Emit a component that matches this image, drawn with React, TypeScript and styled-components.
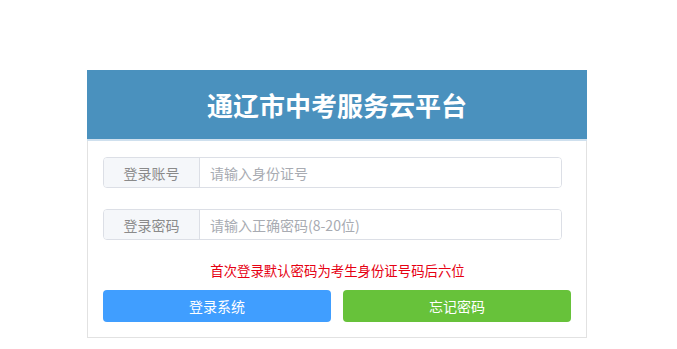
import styled, { createGlobalStyle } from "styled-components";

const GlobalStyle = createGlobalStyle`
  html, body {
    margin: 0;
    padding: 0;
    background: #ffffff;
    font-family: "Noto Sans CJK SC", "Noto Sans", sans-serif;
  }
  * { box-sizing: border-box; }
`;

const Page = styled.div`
  width: 677px;
  height: 349px;
  padding-top: 70px;
  padding-left: 87px;
`;

const Card = styled.div`
  width: 500px;
  border: 1px solid #e2e2e2;
  border-top: none;
  background: #fff;
`;

const Header = styled.div`
  height: 71px;
  margin: 0 -1px;
  background: #4a91be;
  border-bottom: 2px solid #cfe0ee;
  display: flex;
  align-items: center;
  justify-content: center;
  color: #fff;
  font-size: 26px;
  font-weight: 700;
`;

const Body = styled.div`
  padding: 16px 14px 15px 15px;
  display: flex;
  flex-direction: column;
`;

const InputGroup = styled.div<{ gap?: number }>`
  width: 459px;
  height: 31px;
  display: flex;
  border: 1px solid #dcdfe6;
  border-radius: 4px;
  overflow: hidden;
  margin-top: ${(p) => p.gap ?? 0}px;
`;

const Addon = styled.div`
  width: 96px;
  flex-shrink: 0;
  background: #f5f7fa;
  border-right: 1px solid #dcdfe6;
  color: #8a8a8a;
  font-size: 14px;
  display: flex;
  align-items: center;
  justify-content: center;
`;

const Field = styled.input`
  flex: 1;
  border: none;
  outline: none;
  padding: 0 10px;
  font-size: 14px;
  font-family: inherit;
  color: #333;
  &::placeholder {
    color: #a8abb2;
  }
`;

const Notice = styled.div`
  margin-top: 20px;
  height: 20px;
  line-height: 20px;
  text-align: center;
  color: #e60012;
  font-size: 13.4px;
`;

const Buttons = styled.div`
  margin-top: 10px;
  display: flex;
  gap: 12px;
`;

const Button = styled.button<{ tone: string }>`
  width: 228px;
  height: 32px;
  border: none;
  border-radius: 4px;
  background: ${(p) => p.tone};
  color: #fff;
  font-size: 14px;
  font-family: inherit;
  cursor: pointer;
`;

export default function App() {
  return (
    <>
      <GlobalStyle />
      <Page>
        <Card>
          <Header>通辽市中考服务云平台</Header>
          <Body>
            <InputGroup>
              <Addon>登录账号</Addon>
              <Field placeholder="请输入身份证号" />
            </InputGroup>
            <InputGroup gap={21}>
              <Addon>登录密码</Addon>
              <Field type="password" placeholder="请输入正确密码(8-20位)" />
            </InputGroup>
            <Notice>首次登录默认密码为考生身份证号码后六位</Notice>
            <Buttons>
              <Button tone="#409eff">登录系统</Button>
              <Button tone="#67c23a">忘记密码</Button>
            </Buttons>
          </Body>
        </Card>
      </Page>
    </>
  );
}
